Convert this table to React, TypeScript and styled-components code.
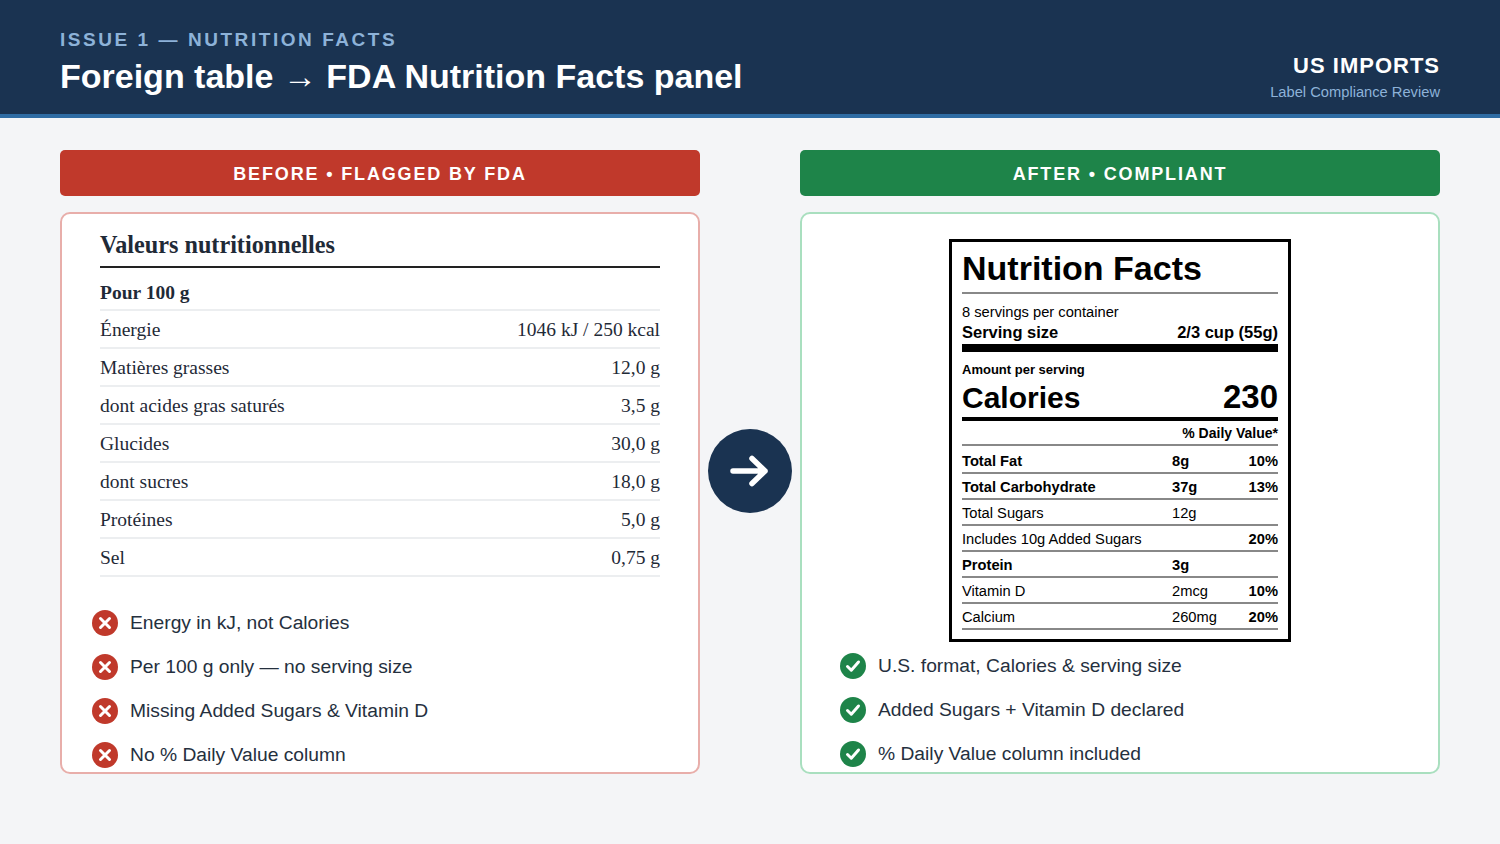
import React from 'react';
import styled, { createGlobalStyle } from 'styled-components';

const GlobalStyle = createGlobalStyle`
  html, body {
    margin: 0;
    padding: 0;
    background: #f4f5f7;
    font-family: "Liberation Sans", Arial, sans-serif;
  }
  * { box-sizing: border-box; }
`;

const Page = styled.div`
  width: 1500px;
  height: 844px;
  display: flex;
  flex-direction: column;
  background: #f4f5f7;
  overflow: hidden;
`;

const Header = styled.header`
  height: 118px;
  background: #1a3351;
  border-bottom: 4px solid #2f6ca3;
  padding: 0 60px;
  display: flex;
  justify-content: space-between;
  align-items: flex-end;
  padding-bottom: 17px;
`;

const HeaderLeft = styled.div`
  display: flex;
  flex-direction: column;
`;

const Kicker = styled.div`
  color: #8db2d8;
  font-size: 19px;
  font-weight: 700;
  letter-spacing: 2.55px;
  line-height: 22px;
  margin-bottom: 5px;
`;

const Title = styled.h1`
  margin: 0;
  color: #ffffff;
  font-size: 34px;
  font-weight: 700;
  line-height: 40px;
  padding-bottom: 1px;
`;

const HeaderRight = styled.div`
  display: flex;
  flex-direction: column;
  align-items: flex-end;
  margin-bottom: -4px;
`;

const Brand = styled.div`
  color: #ffffff;
  font-size: 22px;
  font-weight: 700;
  letter-spacing: 1px;
  line-height: 26px;
`;

const BrandSub = styled.div`
  color: #8db2d8;
  font-size: 14.7px;
  line-height: 18px;
  margin-top: 4px;
`;

const Main = styled.main`
  display: grid;
  grid-template-columns: 640px 1fr 640px;
  padding: 32px 60px 0;
`;

const Column = styled.section`
  display: flex;
  flex-direction: column;
  gap: 16px;
`;

const Banner = styled.div<{ $tone: 'bad' | 'good' }>`
  height: 46px;
  border-radius: 5px;
  background: ${p => (p.$tone === 'bad' ? '#c0392b' : '#1e8449')};
  color: #ffffff;
  font-size: 18px;
  font-weight: 700;
  letter-spacing: 1.85px;
  display: flex;
  align-items: center;
  justify-content: center;
  padding-top: 2px;
`;

const Card = styled.div<{ $tone: 'bad' | 'good' }>`
  height: 562px;
  background: #ffffff;
  border: 2px solid ${p => (p.$tone === 'bad' ? '#e8aeaa' : '#a9dfbf')};
  border-radius: 10px;
  display: flex;
  flex-direction: column;
  overflow: hidden;
`;

const ArrowCol = styled.div`
  display: flex;
  align-items: center;
  justify-content: center;
  padding-top: 18px;
`;

const ArrowCircle = styled.div`
  width: 84px;
  height: 84px;
  border-radius: 50%;
  background: #1a3351;
  display: flex;
  align-items: center;
  justify-content: center;
`;

/* left card: French table */

const FrTable = styled.div`
  padding: 17px 38px 0;
  font-family: "Liberation Serif", "Times New Roman", serif;
  color: #1f2a37;
`;

const FrTitle = styled.div`
  font-size: 24.2px;
  font-weight: 700;
  line-height: 28px;
  padding-bottom: 7px;
  border-bottom: 2px solid #222;
`;

const FrRow = styled.div<{ $head?: boolean }>`
  display: flex;
  justify-content: space-between;
  align-items: center;
  border-bottom: 2px solid #eceef0;
  font-size: 19.5px;
  font-weight: ${p => (p.$head ? 700 : 400)};
  padding-top: ${p => (p.$head ? '9px' : '2px')};
  height: ${p => (p.$head ? '43px' : '38px')};
`;

/* checklists */

const CheckList = styled.ul<{ $inset: number; $top: number }>`
  list-style: none;
  margin: ${p => p.$top}px 0 0;
  padding: 0 0 0 ${p => p.$inset}px;
  display: flex;
  flex-direction: column;
  gap: 18px;
`;

const CheckItem = styled.li`
  display: flex;
  align-items: center;
  gap: 12px;
  height: 26px;
  font-size: 19.25px;
  color: #25303e;
`;

/* right card: US label */

const LabelWrap = styled.div`
  display: flex;
  justify-content: center;
  padding-top: 25px;
`;

const Label = styled.div`
  width: 342px;
  border: 3px solid #000;
  padding: 6px 10px 9px;
  color: #000;
  font-family: "Liberation Sans", Arial, sans-serif;
`;

const LabelTitle = styled.div`
  font-size: 34px;
  font-weight: 700;
  line-height: 40px;
  padding-bottom: 4px;
  border-bottom: 2px solid #888;
`;

const Servings = styled.div`
  font-size: 14.7px;
  line-height: 16px;
  margin-top: 10px;
`;

const ServingSize = styled.div`
  display: flex;
  justify-content: space-between;
  font-size: 16.5px;
  font-weight: 700;
  line-height: 20px;
  margin-top: 2px;
  padding-bottom: 2px;
  border-bottom: 8px solid #000;
`;

const AmountLabel = styled.div`
  font-size: 13px;
  font-weight: 700;
  line-height: 14px;
  margin-top: 11px;
`;

const CaloriesRow = styled.div`
  display: flex;
  justify-content: space-between;
  align-items: baseline;
  font-weight: 700;
  line-height: 32px;
  margin-top: 4px;
  border-bottom: 4px solid #000;
  padding-bottom: 3px;
`;

const CalWord = styled.span`
  font-size: 30px;
`;

const CalNum = styled.span`
  font-size: 33px;
`;

const DvHead = styled.div`
  text-align: right;
  font-size: 14px;
  font-weight: 700;
  line-height: 16px;
  padding: 4px 0 3px;
  margin-bottom: 2px;
  border-bottom: 2px solid #888;
`;

const NRow = styled.div<{ $bold?: boolean }>`
  display: grid;
  grid-template-columns: 210px 1fr auto;
  align-items: center;
  height: 26px;
  border-bottom: 2px solid #888;
  font-size: 14.7px;
  font-weight: ${p => (p.$bold ? 700 : 400)};
  padding-top: 1px;
`;

const Pct = styled.span`
  font-weight: 700;
  text-align: right;
`;

const XIcon = () => (
  <svg width="26" height="26" viewBox="0 0 26 26">
    <circle cx="13" cy="13" r="13" fill="#c0392b" />
    <path d="M8.5 8.5 L17.5 17.5 M17.5 8.5 L8.5 17.5" stroke="#fff" strokeWidth="3" strokeLinecap="round" />
  </svg>
);

const CheckIcon = () => (
  <svg width="26" height="26" viewBox="0 0 26 26">
    <circle cx="13" cy="13" r="13" fill="#1e8449" />
    <path d="M7.5 13.5 L11.3 17.2 L18.5 9" stroke="#fff" strokeWidth="3" fill="none" strokeLinecap="round" strokeLinejoin="round" />
  </svg>
);

const frRows: [string, string][] = [
  ['Énergie', '1046 kJ / 250 kcal'],
  ['Matières grasses', '12,0 g'],
  ['dont acides gras saturés', '3,5 g'],
  ['Glucides', '30,0 g'],
  ['dont sucres', '18,0 g'],
  ['Protéines', '5,0 g'],
  ['Sel', '0,75 g'],
];

const problems = [
  'Energy in kJ, not Calories',
  'Per 100 g only — no serving size',
  'Missing Added Sugars & Vitamin D',
  'No % Daily Value column',
];

const fixes = [
  'U.S. format, Calories & serving size',
  'Added Sugars + Vitamin D declared',
  '% Daily Value column included',
];

const nutrients = [
  { name: 'Total Fat', amt: '8g', pct: '10%', bold: true },
  { name: 'Total Carbohydrate', amt: '37g', pct: '13%', bold: true },
  { name: 'Total Sugars', amt: '12g', pct: '' },
  { name: 'Includes 10g Added Sugars', amt: '', pct: '20%' },
  { name: 'Protein', amt: '3g', pct: '', bold: true },
  { name: 'Vitamin D', amt: '2mcg', pct: '10%' },
  { name: 'Calcium', amt: '260mg', pct: '20%' },
];

export default function App() {
  return (
    <Page>
      <GlobalStyle />
      <Header>
        <HeaderLeft>
          <Kicker>ISSUE 1 — NUTRITION FACTS</Kicker>
          <Title>Foreign table → FDA Nutrition Facts panel</Title>
        </HeaderLeft>
        <HeaderRight>
          <Brand>US IMPORTS</Brand>
          <BrandSub>Label Compliance Review</BrandSub>
        </HeaderRight>
      </Header>

      <Main>
        <Column>
          <Banner $tone="bad">BEFORE • FLAGGED BY FDA</Banner>
          <Card $tone="bad">
            <FrTable>
              <FrTitle>Valeurs nutritionnelles</FrTitle>
              <FrRow $head>
                <span>Pour 100 g</span>
              </FrRow>
              {frRows.map(([k, v]) => (
                <FrRow key={k}>
                  <span>{k}</span>
                  <span>{v}</span>
                </FrRow>
              ))}
            </FrTable>
            <CheckList $inset={30} $top={33}>
              {problems.map(t => (
                <CheckItem key={t}>
                  <XIcon />
                  {t}
                </CheckItem>
              ))}
            </CheckList>
          </Card>
        </Column>

        <ArrowCol>
          <ArrowCircle>
            <svg width="40" height="40" viewBox="0 0 40 40">
              <path d="M3 20 H35 M22 7.5 L35 20 L22 32.5" stroke="#fff" strokeWidth="5.5" fill="none" strokeLinecap="round" strokeLinejoin="round" />
            </svg>
          </ArrowCircle>
        </ArrowCol>

        <Column>
          <Banner $tone="good">AFTER • COMPLIANT</Banner>
          <Card $tone="good">
            <LabelWrap>
              <Label>
                <LabelTitle>Nutrition Facts</LabelTitle>
                <Servings>8 servings per container</Servings>
                <ServingSize>
                  <span>Serving size</span>
                  <span>2/3 cup (55g)</span>
                </ServingSize>
                <AmountLabel>Amount per serving</AmountLabel>
                <CaloriesRow>
                  <CalWord>Calories</CalWord>
                  <CalNum>230</CalNum>
                </CaloriesRow>
                <DvHead>% Daily Value*</DvHead>
                {nutrients.map(n => (
                  <NRow key={n.name} $bold={n.bold}>
                    <span>{n.name}</span>
                    <span>{n.amt}</span>
                    <Pct>{n.pct}</Pct>
                  </NRow>
                ))}
              </Label>
            </LabelWrap>
            <CheckList $inset={38} $top={11}>
              {fixes.map(t => (
                <CheckItem key={t}>
                  <CheckIcon />
                  {t}
                </CheckItem>
              ))}
            </CheckList>
          </Card>
        </Column>
      </Main>
    </Page>
  );
}
